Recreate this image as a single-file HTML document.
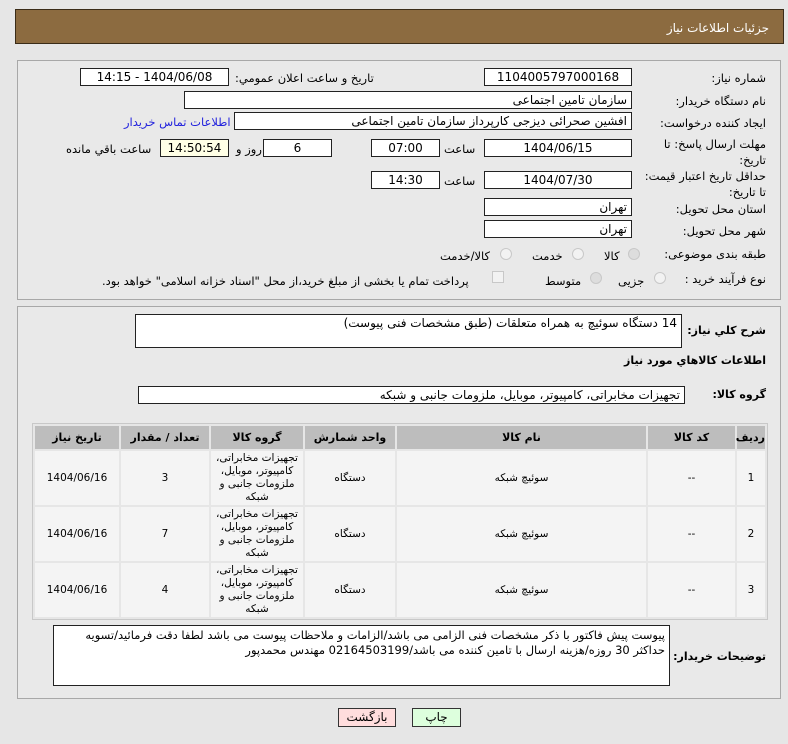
<!DOCTYPE html>
<html><head><meta charset="utf-8">
<style>
*{box-sizing:border-box;margin:0;padding:0}
body{width:788px;height:744px;background:#e6e6e6;font-family:"DejaVu Sans","Liberation Sans",sans-serif;font-size:11px;color:#000;position:relative;overflow:hidden;direction:rtl}
.a{position:absolute;white-space:nowrap}
.hdr{left:15px;top:9px;width:769px;height:35px;background:#8c6b40;border:1px solid #3a2c18;color:#fff;font-size:12px;padding:11px 14px 0 0}
.pan{position:absolute;left:17px;width:764px;border:1px solid #a8a8a8;background:#e9e9e9}
.box{position:absolute;background:#fff;border:1px solid #222;height:18px;font-size:12px;line-height:16px;padding:0 4px}
.c{text-align:center}
.lab{position:absolute;font-size:11.5px;white-space:nowrap}
.b{font-weight:bold;font-size:11px;letter-spacing:-0.3px}
.rad{position:absolute;width:12px;height:12px;border-radius:50%;border:1px solid #c8c8c8;background:#f2f2f2}
table{position:absolute;left:32px;top:423px;width:736px;border-collapse:separate;border-spacing:2px;background:#e6e6e6;border:1px solid #c8c8c8;direction:rtl;table-layout:fixed}
th{background:#bdbdbd;height:23px;font-size:11px;font-weight:bold;padding:0}
td{background:#f4f4f4;height:54px;text-align:center;font-size:10.5px;line-height:13px;padding:0}
.btn{position:absolute;top:708px;height:19px;border:1px solid #333;font-size:12px;text-align:center;line-height:17px}
</style></head><body>
<div class="a hdr">جزئیات اطلاعات نیاز</div>
<div class="pan" style="top:60px;height:240px"></div>
<div class="pan" style="top:306px;height:393px"></div>

<div class="lab" style="right:22px;top:71px">شماره نیاز:</div>
<div class="box c" style="left:484px;top:68px;width:148px">1104005797000168</div>
<div class="lab" style="left:235px;top:71px">تاریخ و ساعت اعلان عمومي:</div>
<div class="box c" style="left:80px;top:68px;width:149px">1404/06/08 - 14:15</div>

<div class="lab" style="right:22px;top:94px">نام دستگاه خریدار:</div>
<div class="box" style="left:184px;top:91px;width:448px">سازمان تامین اجتماعی</div>

<div class="lab" style="right:22px;top:116px">ایجاد کننده درخواست:</div>
<div class="box" style="left:234px;top:112px;width:398px">افشین صحرائی دیزجی کارپرداز سازمان تامین اجتماعی</div>
<div class="lab" style="left:124px;top:115px;color:#2222dd">اطلاعات تماس خریدار</div>

<div class="lab" style="right:22px;top:136px;line-height:16px;text-align:right">مهلت ارسال پاسخ: تا<br>تاریخ:</div>
<div class="box c" style="left:484px;top:139px;width:148px">1404/06/15</div>
<div class="lab" style="left:444px;top:142px">ساعت</div>
<div class="box c" style="left:371px;top:139px;width:69px">07:00</div>
<div class="box c" style="left:263px;top:139px;width:69px">6</div>
<div class="lab" style="left:236px;top:142px">روز و</div>
<div class="box c" style="left:160px;top:139px;width:69px;background:#ffffe6">14:50:54</div>
<div class="lab" style="left:66px;top:142px">ساعت باقي مانده</div>

<div class="lab" style="right:22px;top:168px;line-height:16px;text-align:right">حداقل تاریخ اعتبار قیمت:<br>تا تاریخ:</div>
<div class="box c" style="left:484px;top:171px;width:148px">1404/07/30</div>
<div class="lab" style="left:444px;top:174px">ساعت</div>
<div class="box c" style="left:371px;top:171px;width:69px">14:30</div>

<div class="lab" style="right:22px;top:202px">استان محل تحویل:</div>
<div class="box" style="left:484px;top:198px;width:148px">تهران</div>
<div class="lab" style="right:22px;top:224px">شهر محل تحویل:</div>
<div class="box" style="left:484px;top:220px;width:148px">تهران</div>

<div class="lab" style="right:22px;top:247px">طبقه بندی موضوعی:</div>
<div class="rad" style="left:628px;top:248px;background:#ddd"></div>
<div class="lab" style="left:604px;top:249px">کالا</div>
<div class="rad" style="left:572px;top:248px"></div>
<div class="lab" style="left:532px;top:249px">خدمت</div>
<div class="rad" style="left:500px;top:248px"></div>
<div class="lab" style="left:440px;top:249px">کالا/خدمت</div>

<div class="lab" style="right:22px;top:272px">نوع فرآیند خرید :</div>
<div class="rad" style="left:654px;top:272px"></div>
<div class="lab" style="left:618px;top:274px">جزیی</div>
<div class="rad" style="left:590px;top:272px;background:#ddd"></div>
<div class="lab" style="left:545px;top:274px">متوسط</div>
<div style="position:absolute;left:492px;top:271px;width:12px;height:12px;border:1px solid #c8c8c8;background:#f2f2f2"></div>
<div class="lab" style="left:102px;top:274px">پرداخت تمام یا بخشی از مبلغ خرید،از محل "اسناد خزانه اسلامی" خواهد بود.</div>

<div class="lab b" style="right:22px;top:324px">شرح کلي نياز:</div>
<div class="box" style="left:135px;top:314px;width:547px;height:34px">14 دستگاه سوئیچ به همراه متعلقات (طبق مشخصات فنی پیوست)</div>
<div class="lab b" style="right:22px;top:354px">اطلاعات کالاهاي مورد نياز</div>
<div class="lab b" style="right:22px;top:388px">گروه کالا:</div>
<div class="box" style="left:138px;top:386px;width:547px">تجهیزات مخابراتی، کامپیوتر، موبایل، ملزومات جانبی و شبکه</div>

<table>
<colgroup><col style="width:28px"><col style="width:87px"><col style="width:249px"><col style="width:90px"><col style="width:92px"><col style="width:88px"><col></colgroup>
<tr><th>ردیف</th><th>کد کالا</th><th>نام کالا</th><th>واحد شمارش</th><th>گروه کالا</th><th>تعداد / مقدار</th><th>تاریخ نیاز</th></tr>
<tr><td>1</td><td>--</td><td>سوئیچ شبکه</td><td>دستگاه</td><td>تجهیزات مخابراتی، کامپیوتر، موبایل، ملزومات جانبی و شبکه</td><td>3</td><td>1404/06/16</td></tr>
<tr><td>2</td><td>--</td><td>سوئیچ شبکه</td><td>دستگاه</td><td>تجهیزات مخابراتی، کامپیوتر، موبایل، ملزومات جانبی و شبکه</td><td>7</td><td>1404/06/16</td></tr>
<tr><td>3</td><td>--</td><td>سوئیچ شبکه</td><td>دستگاه</td><td>تجهیزات مخابراتی، کامپیوتر، موبایل، ملزومات جانبی و شبکه</td><td>4</td><td>1404/06/16</td></tr>
</table>

<div class="lab b" style="right:22px;top:650px">توضیحات خریدار:</div>
<div class="box" style="left:53px;top:625px;width:617px;height:61px;white-space:normal;font-size:11.5px;line-height:15px;padding-top:2px">پیوست پیش فاکتور با ذکر مشخصات فنی الزامی می باشد/الزامات و ملاحظات پیوست می باشد لطفا دقت فرمائید/تسویه حداکثر 30 روزه/هزینه ارسال با تامین کننده می باشد/02164503199 مهندس محمدپور</div>

<div class="btn" style="left:338px;width:58px;background:#fdd">بازگشت</div>
<div class="btn" style="left:412px;width:49px;background:#dfd">چاپ</div>
</body></html>
